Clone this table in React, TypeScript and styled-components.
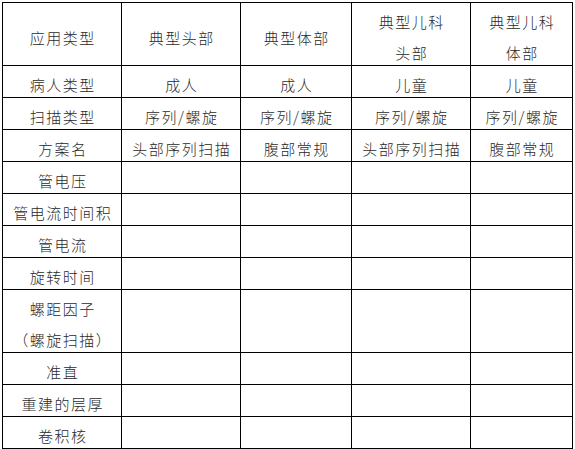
import styled, { createGlobalStyle } from 'styled-components'

const GlobalStyle = createGlobalStyle`
  html, body {
    margin: 0;
    padding: 0;
    background: #ffffff;
  }
`

const header = ['应用类型', '典型头部', '典型体部', '典型儿科\n头部', '典型儿科\n体部']

const infoRows = [
  ['病人类型', '成人', '成人', '儿童', '儿童'],
  ['扫描类型', '序列/螺旋', '序列/螺旋', '序列/螺旋', '序列/螺旋'],
  ['方案名', '头部序列扫描', '腹部常规', '头部序列扫描', '腹部常规'],
]

const paramRows = [
  '管电压',
  '管电流时间积',
  '管电流',
  '旋转时间',
  '螺距因子\n（螺旋扫描）',
  '准直',
  '重建的层厚',
  '卷积核',
]

const colWidths = [119, 119, 111, 119, 102]

const renderText = (text: string) => (
  <Content>
    {text.split('\n').map((line, i) => (
      <Line key={i}>{line}</Line>
    ))}
  </Content>
)

const App = () => {
  return (
    <Page>
      <GlobalStyle />
      <Table>
        <colgroup>
          {colWidths.map((w, i) => (
            <col key={i} style={{ width: w }} />
          ))}
        </colgroup>
        <tbody>
          <Row $tall>
            {header.map((h, i) => (
              <Cell key={i}>{renderText(h)}</Cell>
            ))}
          </Row>
          {infoRows.map((row, r) => (
            <Row key={r}>
              {row.map((c, i) => (
                <Cell key={i}>{renderText(c)}</Cell>
              ))}
            </Row>
          ))}
          {paramRows.map((label, r) => (
            <Row key={r}>
              <Cell>{renderText(label)}</Cell>
              {[0, 1, 2, 3].map((i) => (
                <Cell key={i} />
              ))}
            </Row>
          ))}
        </tbody>
      </Table>
    </Page>
  )
}

export default App

const Page = styled.div`
  padding: 2px 0 0 2px;
  background: #ffffff;
`

const Table = styled.table`
  border-collapse: collapse;
  table-layout: fixed;
  width: 570px;
  font-family: 'Noto Sans CJK SC', 'Noto Sans', sans-serif;
  font-size: 15px;
  font-weight: 300;
  color: #2a2a2a;
`

const Row = styled.tr<{ $tall?: boolean }>`
  height: ${(p) => (p.$tall ? '63px' : '32px')};
`

const Cell = styled.td`
  border: 1px solid #000000;
  padding: 3px 0 0 1.5px;
  text-align: center;
  vertical-align: middle;
  letter-spacing: 1.5px;
  white-space: nowrap;
  overflow: hidden;
`

const Content = styled.div`
  margin-bottom: -3px;
`

const Line = styled.div`
  line-height: 31px;
`
